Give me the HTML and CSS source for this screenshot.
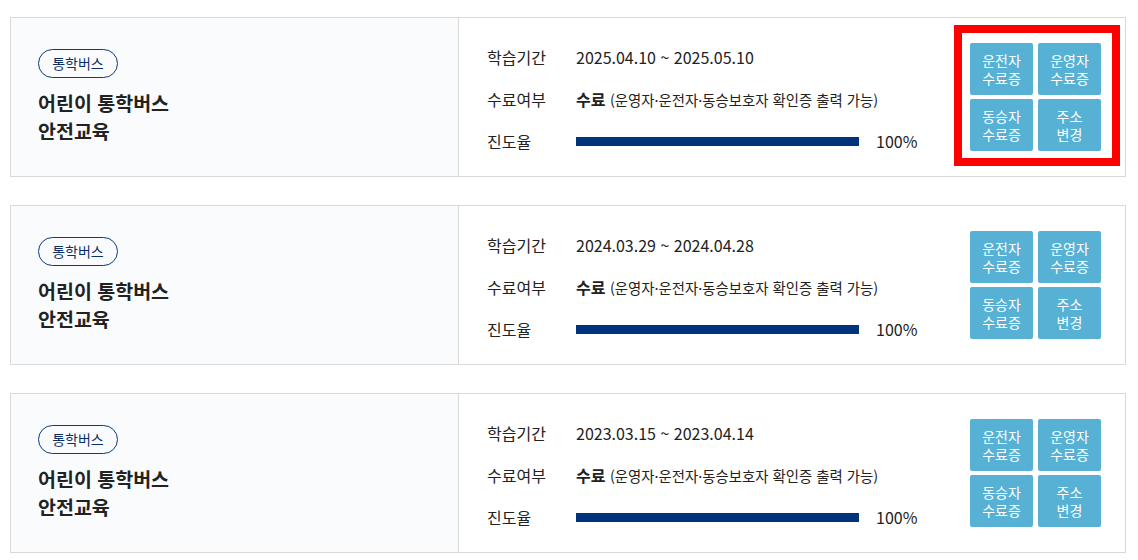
FILE: index.html
```html
<!DOCTYPE html>
<html lang="ko">
<head>
<meta charset="utf-8">
<title>수강 내역</title>
<link rel="stylesheet" href="styles.css">
</head>
<body>
<div class="list">
  <div class="card">
    <div class="card-left">
      <span class="tag">통학버스</span>
      <h3 class="title">어린이 통학버스<br>안전교육</h3>
    </div>
    <div class="card-right">
      <div class="info">
        <div class="row"><span class="label">학습기간</span><span class="value">2025.04.10 ~ 2025.05.10</span></div>
        <div class="row"><span class="label">수료여부</span><span class="value"><b class="done">수료</b> <span class="note">(운영자·운전자·동승보호자 확인증 출력 가능)</span></span></div>
        <div class="row"><span class="label">진도율</span><span class="value progress"><span class="bar"><span class="fill" style="width:100%"></span></span><span class="pct">100%</span></span></div>
      </div>
      <div class="btns highlighted">
        <button class="btn">운전자<br>수료증</button>
        <button class="btn">운영자<br>수료증</button>
        <button class="btn">동승자<br>수료증</button>
        <button class="btn">주소<br>변경</button>
        <span class="mark"></span>
      </div>
    </div>
  </div>

  <div class="card">
    <div class="card-left">
      <span class="tag">통학버스</span>
      <h3 class="title">어린이 통학버스<br>안전교육</h3>
    </div>
    <div class="card-right">
      <div class="info">
        <div class="row"><span class="label">학습기간</span><span class="value">2024.03.29 ~ 2024.04.28</span></div>
        <div class="row"><span class="label">수료여부</span><span class="value"><b class="done">수료</b> <span class="note">(운영자·운전자·동승보호자 확인증 출력 가능)</span></span></div>
        <div class="row"><span class="label">진도율</span><span class="value progress"><span class="bar"><span class="fill" style="width:100%"></span></span><span class="pct">100%</span></span></div>
      </div>
      <div class="btns">
        <button class="btn">운전자<br>수료증</button>
        <button class="btn">운영자<br>수료증</button>
        <button class="btn">동승자<br>수료증</button>
        <button class="btn">주소<br>변경</button>
      </div>
    </div>
  </div>

  <div class="card">
    <div class="card-left">
      <span class="tag">통학버스</span>
      <h3 class="title">어린이 통학버스<br>안전교육</h3>
    </div>
    <div class="card-right">
      <div class="info">
        <div class="row"><span class="label">학습기간</span><span class="value">2023.03.15 ~ 2023.04.14</span></div>
        <div class="row"><span class="label">수료여부</span><span class="value"><b class="done">수료</b> <span class="note">(운영자·운전자·동승보호자 확인증 출력 가능)</span></span></div>
        <div class="row"><span class="label">진도율</span><span class="value progress"><span class="bar"><span class="fill" style="width:100%"></span></span><span class="pct">100%</span></span></div>
      </div>
      <div class="btns">
        <button class="btn">운전자<br>수료증</button>
        <button class="btn">운영자<br>수료증</button>
        <button class="btn">동승자<br>수료증</button>
        <button class="btn">주소<br>변경</button>
      </div>
    </div>
  </div>
</div>
</body>
</html>
```

FILE: styles.css
```css
* { box-sizing: border-box; }
html, body { margin: 0; padding: 0; background: #fff; }
body {
  font-family: "Noto Sans CJK KR", "Noto Sans", sans-serif;
  color: #222;
}
.list {
  padding: 17px 12px 0 10px;
  display: flex;
  flex-direction: column;
  gap: 28px;
}
.card {
  display: flex;
  height: 160px;
  border: 1px solid #d9d9d9;
}
.card-left {
  width: 448px;
  background: #f9fbfd;
  border-right: 1px solid #d9d9d9;
  padding: 0 0 0 27px;
  display: flex;
  flex-direction: column;
  justify-content: center;
  align-items: flex-start;
}
.tag {
  display: inline-flex;
  align-items: center;
  justify-content: center;
  width: 80px;
  height: 29px;
  border: 1px solid #0b3a7e;
  border-radius: 15px;
  font-size: 14px;
  color: #0b2f66;
  line-height: 1;
}
.title {
  margin: 11px 0 0;
  font-size: 19.5px;
  font-weight: 700;
  line-height: 28.5px;
  color: #222;
}
.card-right {
  flex: 1;
  display: flex;
  align-items: center;
  padding: 0 24px 0 28px;
}
.info {
  flex: 1;
  display: flex;
  flex-direction: column;
  padding-top: 4px;
}
.row {
  display: flex;
  align-items: center;
  height: 42px;
}
.label {
  width: 89px;
  font-size: 16px;
}
.value {
  font-size: 16px;
}
.done { font-weight: 700; }
.note { font-size: 14.4px; }
.progress {
  display: flex;
  align-items: center;
}
.bar {
  display: block;
  width: 283px;
  height: 9px;
  background: #e6e9ef;
}
.fill {
  display: block;
  height: 100%;
  background: #00337a;
}
.pct {
  margin-left: 17px;
  font-size: 16px;
}
.btns {
  position: relative;
  display: grid;
  grid-template-columns: 63px 63px;
  grid-auto-rows: 52px;
  column-gap: 5px;
  row-gap: 4px;
}
.btn {
  border: 0;
  border-radius: 2px;
  background: #57b1d4;
  color: #fff;
  font-family: "Noto Sans CJK KR", "Noto Sans", sans-serif;
  font-size: 14px;
  line-height: 18px;
  padding: 0;
  cursor: pointer;
}
.mark {
  position: absolute;
  top: -18px;
  left: -16px;
  right: -19px;
  bottom: -15px;
  border: 8px solid #ff0000;
  pointer-events: none;
}
```
